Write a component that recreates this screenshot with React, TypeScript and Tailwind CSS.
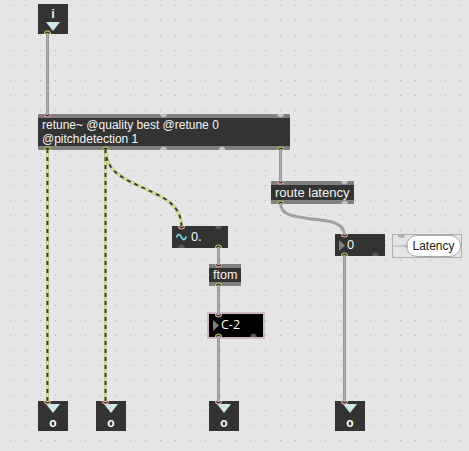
import type { ReactNode } from "react";

type PortKind = "hot" | "out" | "idle" | "dim";

function Port({ x, y, kind, down }: { x: number; y: number; kind: PortKind; down?: boolean }) {
  const d = down ? `M${x - 3} ${y}a3 3 0 0 0 6 0` : `M${x - 3} ${y}a3 3 0 0 1 6 0`;
  if (kind === "idle") return <path d={d} fill="#c4c4c4" stroke="#c4c4c4" strokeWidth={0.6} />;
  if (kind === "dim") return <path d={d} fill="#5c5c5c" stroke="#5c5c5c" strokeWidth={0.6} />;
  return <path d={d} fill="#333" stroke={kind === "hot" ? "#e39a90" : "#c3c84e"} strokeWidth={1.2} />;
}

function Cord({ d }: { d: string }) {
  return (
    <g fill="none">
      <path d={d} stroke="#999" strokeWidth={3} />
      <path d={d} stroke="#adadad" strokeWidth={1} />
    </g>
  );
}

function SignalCord({ d }: { d: string }) {
  return (
    <g fill="none">
      <path d={d} stroke="#a9b19a" strokeWidth={3} />
      <path d={d} stroke="#d6f67a" strokeWidth={1.8} />
      <path d={d} stroke="#35382a" strokeWidth={1.8} strokeDasharray="4 4" />
    </g>
  );
}

function Box({ className, children }: { className: string; children: ReactNode }) {
  return (
    <div className={`absolute border-y-4 border-[#808080] bg-[#333] whitespace-nowrap text-[#f4f4f4] ${className}`}>
      {children}
    </div>
  );
}

function Outlet({ className }: { className: string }) {
  return (
    <div className={`absolute top-[401px] flex h-[30px] w-[30px] flex-col items-center bg-[#333] pt-[3px] ${className}`}>
      <svg width="14" height="9" viewBox="0 0 14 9">
        <path d="M0 0h14L7 9z" fill="#cfe8ea" />
      </svg>
      <span className="mt-[3px] text-[12px] leading-[14px] font-bold text-white">o</span>
    </div>
  );
}

export default function App() {
  return (
    <div className="relative h-[451px] w-[469px] overflow-hidden bg-[#e5e5e5] font-['Liberation_Sans',Arial,sans-serif]">
      <svg className="absolute inset-0" width="469" height="451">
        <defs>
          <pattern id="grid" x="10" y="5" width="15" height="15" patternUnits="userSpaceOnUse">
            <rect width="1" height="1" fill="#b0b0b0" />
          </pattern>
        </defs>
        <rect width="469" height="451" fill="url(#grid)" />
      </svg>

      <div className="absolute top-[4px] left-[38px] flex h-[30px] w-[30px] flex-col items-center bg-[#333] pt-[3px]">
        <span className="text-[13px] leading-[14px] font-bold text-[#e5e5e5]">i</span>
        <svg className="mt-px" width="14" height="9" viewBox="0 0 14 9">
          <path d="M0 0h14L7 9z" fill="#cfe8ea" />
        </svg>
      </div>

      <Box className="top-[114px] left-[38px] h-[36px] w-[252px] pl-1 text-[12px] leading-[14px]">
        retune~ @quality best @retune 0<br />@pitchdetection 1
      </Box>
      <Box className="top-[181px] left-[271px] h-[23px] w-[83px] pl-1 text-[13px] leading-[15px]">route latency</Box>
      <Box className="top-[264px] left-[209px] h-[22px] w-[32px] pl-1 text-[12.5px] leading-[14px]">ftom</Box>

      <div className="absolute top-[226px] left-[172px] flex h-[22px] w-[56px] items-center bg-[#333] pl-1 font-['Open_Sans',sans-serif] text-[12.5px] text-white">
        <svg width="11" height="8" viewBox="0 0 11 8" fill="none">
          <path d="M.5 4.5C2 .5 3.5 .5 5.3 4S8.500 7.500 10.500 3.500" stroke="#73d3dc" strokeWidth="1.8" />
        </svg>
        <span className="ml-[4px]">0.</span>
      </div>
      <div className="absolute top-[234px] left-[335px] flex h-[22px] w-[50px] items-center bg-[#333] pl-1 font-['Open_Sans',sans-serif] text-[12.5px] text-white">
        <svg width="6" height="11" viewBox="0 0 6 11"><path d="M0 0l6 5.500L0 11z" fill="#808080" /></svg>
        <span className="ml-[2px]">0</span>
      </div>
      <div className="absolute top-[312px] left-[207px] flex h-[27px] w-[58px] items-center border-2 border-[#cdb8c3] bg-black pl-1 font-['Open_Sans',sans-serif] text-[12.5px] text-white">
        <svg width="6" height="11" viewBox="0 0 6 11"><path d="M0 0l6 5.500L0 11z" fill="#808080" /></svg>
        <span className="ml-[2px]">C-2</span>
      </div>

      <div className="absolute top-[234px] left-[392px] flex h-[24px] w-[70px] justify-end border border-[#b0b0b0]">
        <div className="h-[22px] w-[55px] rounded-full border border-[#a8a8a8] bg-white text-center text-[12px] leading-[21px] text-[#222]">Latency</div>
      </div>

      <Outlet className="left-[38px]" />
      <Outlet className="left-[96px]" />
      <Outlet className="left-[209px]" />
      <Outlet className="left-[335px]" />

      <svg className="absolute inset-0" width="469" height="451">
        <path d="M393 245.500h8q4 0 7-2v5q-3-2-7-2h-8" fill="#b9b9b9" />
        <path d="M398 235a3.500 3 0 0 0 7 0" fill="#b0b0b0" />
        <Port x={47.5} y={34} kind="out" />
        <Port x={47.5} y={114} kind="hot" down />
        <Port x={163.5} y={114} kind="idle" down />
        <Port x={280.5} y={114} kind="idle" down />
        <Port x={47.5} y={150} kind="out" />
        <Port x={105.5} y={150} kind="out" />
        <Port x={163.5} y={150} kind="idle" />
        <Port x={222} y={150} kind="idle" />
        <Port x={280.5} y={150} kind="out" />
        <Port x={280.5} y={181} kind="hot" down />
        <Port x={344.5} y={181} kind="idle" down />
        <Port x={280.5} y={204} kind="out" />
        <Port x={344.5} y={204} kind="idle" />
        <Port x={181.5} y={226} kind="hot" down />
        <Port x={218.5} y={226} kind="dim" down />
        <Port x={181.5} y={248} kind="dim" />
        <Port x={218.5} y={248} kind="out" />
        <Port x={218.5} y={264} kind="hot" down />
        <Port x={218.5} y={286} kind="out" />
        <Port x={218.5} y={314} kind="hot" down />
        <Port x={218.5} y={337} kind="out" />
        <Port x={253.5} y={337} kind="dim" />
        <Port x={344.5} y={234} kind="hot" down />
        <Port x={344.5} y={256} kind="out" />
        <Port x={375.5} y={256} kind="dim" />
        <Port x={47.5} y={401} kind="hot" down />
        <Port x={105.5} y={401} kind="hot" down />
        <Port x={218.5} y={401} kind="hot" down />
        <Port x={344.5} y={401} kind="hot" down />
        <Cord d="M47.500 33V115" />
        <Cord d="M280.500 149V182" />
        <Cord d="M280.500 203C280.500 216 296 217 312.500 219S344.500 222 344.500 235" />
        <Cord d="M218.500 247V265" />
        <Cord d="M218.500 285V315" />
        <Cord d="M218.500 336V402" />
        <Cord d="M344.500 255V402" />
        <SignalCord d="M47.500 149V402" />
        <SignalCord d="M105.500 149V402" />
        <SignalCord d="M105.500 149C105.500 172 124.500 179 143.500 188S181.500 204 181.500 227" />
      </svg>
    </div>
  );
}
